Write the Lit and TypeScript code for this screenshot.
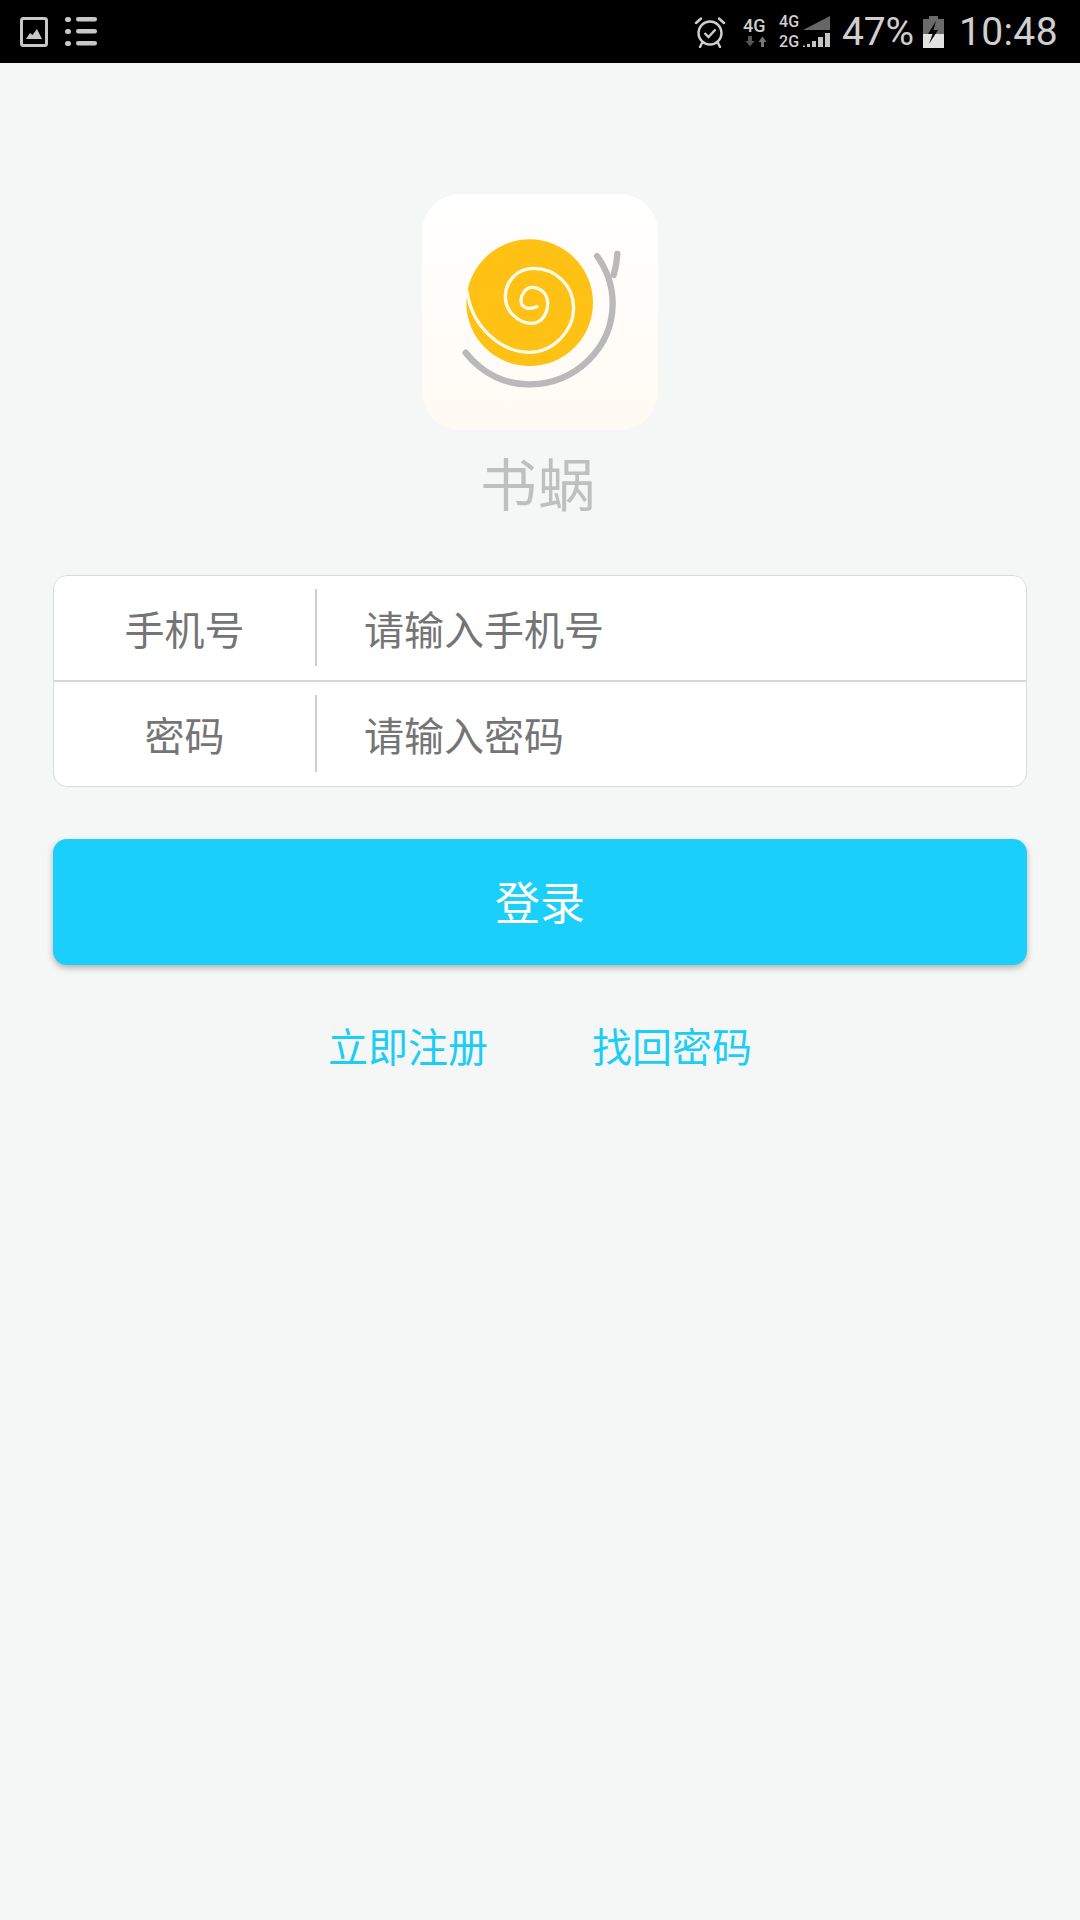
import { LitElement, html, css } from "lit";
import { customElement } from "lit/decorators.js";

@customElement("app-root")
export class AppRoot extends LitElement {
  static styles = css`
    :host {
      display: block;
      width: 1080px;
      height: 1920px;
      background: #f5f7f7;
      font-family: "Noto Sans CJK SC", "Noto Sans", sans-serif;
      overflow: hidden;
    }
    .status {
      height: 63px;
      background: #000;
      display: flex;
      align-items: center;
      color: #cfcfcf;
      font-family: Roboto, "Liberation Sans", sans-serif;
    }
    .status svg { display: block; flex: none; }
    .img-icon { margin-left: 20px; }
    .list-icon { margin-left: 17px; }
    .spacer { flex: 1; }
    .net { margin-left: 17px; display: flex; align-items: center; font-weight: 500; }
    .net-a { width: 36px; font-size: 18px; line-height: 20px; }
    .net-b { width: 24px; font-size: 16px; line-height: 20px; }
    .net-c { width: 28px; display: flex; flex-direction: column; gap: 3px; }
    .pct { font-size: 39px; line-height: 62px; margin-left: 11px; letter-spacing: -0.2px; }
    .batt { margin-left: 9px; }
    .time { font-size: 39px; line-height: 62px; margin-left: 15px; margin-right: 22px; letter-spacing: 0.4px; }
    main {
      display: flex;
      flex-direction: column;
      align-items: center;
      padding: 131px 53px 0;
    }
    .logo {
      width: 236px;
      height: 236px;
      border-radius: 38px;
      background: linear-gradient(#ffffff, #fffaf3);
      display: block;
    }
    .name {
      margin-top: 16px;
      font-size: 57px;
      line-height: 70px;
      font-weight: 400;
      color: #bfbfbf;
      letter-spacing: 1px;
      margin-right: 4px;
    }
    .card {
      align-self: stretch;
      margin-top: 59px;
      background: #fff;
      border: 1px solid #d8dcdc;
      border-radius: 14px;
      height: 212px;
      box-sizing: border-box;
      display: flex;
      flex-direction: column;
      font-size: 40px;
      color: #757575;
    }
    .row { flex: 1; display: flex; align-items: center; padding-bottom: 1px; }
    .row + .row { border-top: 2px solid #d6d8d8; }
    .label { width: 261px; text-align: center; }
    .rule { width: 2px; height: 77px; background: #cfcfcf; }
    .value { margin-left: 47px; }
    .login {
      align-self: stretch;
      margin-top: 52px;
      height: 126px;
      background: #1ad0fa;
      border-radius: 14px;
      box-shadow: 0 3px 6px rgba(0, 0, 0, 0.28);
      color: #fff;
      font-size: 45px;
      line-height: 124px;
      text-align: center;
    }
    .links {
      margin-top: 50px;
      display: flex;
      gap: 104px;
      font-size: 40px;
      line-height: 60px;
      color: #1ccdf5;
    }
  `;

  render() {
    return html`
      <div class="status">
        <svg class="img-icon" width="28" height="30" viewBox="0 0 28 30">
          <rect x="1.5" y="1.5" width="25" height="27" rx="2" fill="none" stroke="#c8c8c8" stroke-width="3"/>
          <path d="M6 22 L10 16 L12.5 18 L17 12 L22 22 Z" fill="#c8c8c8"/>
        </svg>
        <svg class="list-icon" width="32" height="30" viewBox="0 0 32 30" fill="#c8c8c8">
          <rect x="0" y="0" width="6" height="5" rx="2.5"/><rect x="11" y="0" width="21" height="4.500" rx="2.2"/>
          <rect x="0" y="12" width="6" height="5" rx="2.500"/><rect x="11" y="12" width="21" height="4.500" rx="2.2"/>
          <rect x="0" y="24" width="6" height="5" rx="2.500"/><rect x="11" y="24" width="21" height="4.500" rx="2.2"/>
        </svg>
        <div class="spacer"></div>
        <svg width="32" height="32" viewBox="0 0 32 32" fill="none" stroke="#cfcfcf" stroke-width="2.4">
          <circle cx="16" cy="17" r="11.500"/>
          <path d="M10.500 17 L14.500 21 L21.500 13.500"/>
          <path d="M2 7 L7 2.500 M30 7 L25 2.500 M8 27 L6 31 M24 27 L26 31" stroke-linecap="round"/>
        </svg>
        <div class="net">
          <div class="net-a">
            <div>4G</div>
            <svg width="26" height="11" viewBox="0 0 26 11">
              <path d="M5 0 h4 v5 h2.500 l-4.500 5.500 l-4.500 -5.500 h2.500 Z" fill="#555"/>
              <path d="M18 11 h3 v-5 h2.500 l-4 -5.500 l-4 5.500 h2.500 Z" fill="#777"/>
            </svg>
          </div>
          <div class="net-b"><div>4G</div><div>2G</div></div>
          <div class="net-c">
            <svg width="28" height="14" viewBox="0 0 28 14"><path d="M0 14 L27 0 V14 Z" fill="#666"/></svg>
            <svg width="28" height="14" viewBox="0 0 28 14"><path d="M0 14 h2 v-1.500 h-2 Z M4 14 h3 v-3 h-3 Z M9 14 h4 v-6 h-4 Z M15 14 h5 v-10 h-5 Z M22 14 h5 v-14 h-5 Z" fill="#c4c4c4"/></svg>
          </div>
        </div>
        <span class="pct">47%</span>
        <svg class="batt" width="21" height="32" viewBox="0 0 21 32">
          <path d="M6 0 h9 v3 h6 v29 h-21 v-29 h6 Z" fill="#6a6a6a"/>
          <path d="M0 18 h21 v14 h-21 Z" fill="#e2e2e2"/>
          <path d="M13 5 L5 18 h4.500 L6 28 L15 14 h-4.500 Z" fill="#000"/>
        </svg>
        <span class="time">10:48</span>
      </div>
      <main>
        <svg class="logo" viewBox="65 42 708 708">
          <circle cx="388" cy="368" r="190" fill="#ffc114"/>
          <path d="M200 335 C215 440 300 515 385 517 C460 518 520 450 520 385 C520 315 465 265 400 265 C350 265 315 305 315 350 C315 395 355 430 395 430 C425 430 442 400 442 370 C442 340 420 322 395 322 C375 322 362 345 362 362 C362 380 380 392 410 380" fill="none" stroke="#fffbea" stroke-width="10" stroke-linecap="round"/>
          <path d="M196 518 C250 585 320 615 390 613 C530 610 637 500 637 370 C637 315 620 270 590 228" fill="none" stroke="#b9b9b9" stroke-width="19" stroke-linecap="round"/>
          <path d="M651 222 C650 245 646 265 640 285" fill="none" stroke="#b9b9b9" stroke-width="19" stroke-linecap="round"/>
        </svg>
        <div class="name">书蜗</div>
        <div class="card">
          <div class="row">
            <span class="label">手机号</span><span class="rule"></span><span class="value">请输入手机号</span>
          </div>
          <div class="row">
            <span class="label">密码</span><span class="rule"></span><span class="value">请输入密码</span>
          </div>
        </div>
        <div class="login">登录</div>
        <div class="links"><span>立即注册</span><span>找回密码</span></div>
      </main>
    `;
  }
}
